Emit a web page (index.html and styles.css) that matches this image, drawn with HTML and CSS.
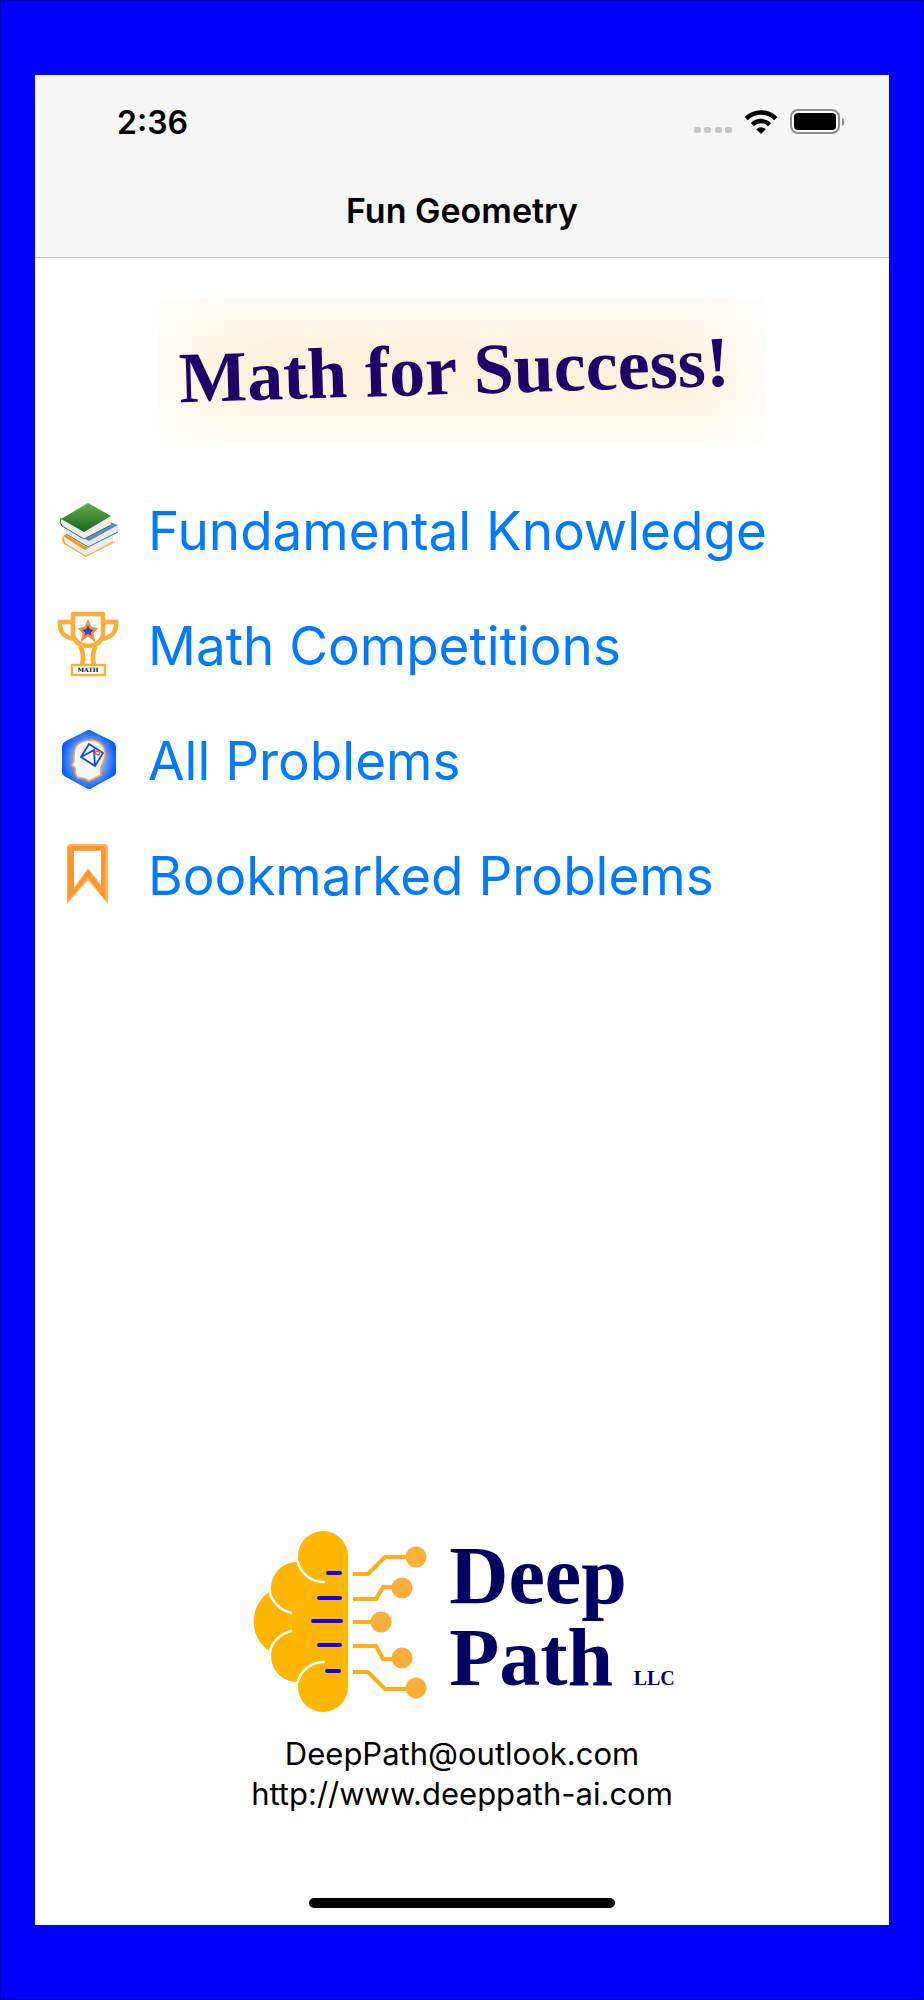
FILE: index.html
```html
<!DOCTYPE html>
<html lang="en">
<head>
    <meta charset="UTF-8">
    <meta name="viewport" content="width=device-width, initial-scale=1.0">
    <title>Fun Geometry</title>
    <link rel="stylesheet" href="styles.css">
</head>
<body>
    <div class="phone">
        <header class="top-bar">
            <div class="status-bar">
                <span class="time">2:36</span>
                <div class="status-icons">
                    <svg class="signal" width="38" height="24" viewBox="0 0 38 24" fill="#c7c7c7">
                        <rect x="0" y="17" width="7" height="6" rx="2"/>
                        <rect x="10" y="17" width="7" height="6" rx="2"/>
                        <rect x="21" y="17" width="7" height="6" rx="2"/>
                        <rect x="31" y="17" width="7" height="6" rx="2"/>
                    </svg>
                    <svg class="wifi" width="34" height="24" viewBox="0 0 34 24">
                        <path d="M2.2 8.6 A21 21 0 0 1 31.8 8.6" fill="none" stroke="#000" stroke-width="4.6"/>
                        <path d="M8.4 14.6 A12.2 12.2 0 0 1 25.6 14.6" fill="none" stroke="#000" stroke-width="4.4"/>
                        <path d="M12.2 19.2 Q17 15.4 21.8 19.2 L17 24 Z"/>
                    </svg>
                    <svg class="battery" width="55" height="26" viewBox="0 0 55 26">
                        <rect x="1" y="1" width="48" height="23" rx="7" fill="#fff" stroke="#8e8e8e" stroke-width="2"/>
                        <rect x="4" y="4" width="42" height="17" rx="4"/>
                        <path d="M52 9 Q54.4 10 54.4 13 T52 17 Z" fill="#8e8e8e"/>
                    </svg>
                </div>
            </div>
            <h1 class="title">Fun Geometry</h1>
        </header>

        <main>
            <div class="hero"><p class="slogan">Math for Success!</p></div>

            <nav class="menu">
                <a href="#fundamentals">
                    <svg class="icon" viewBox="0 0 64 64">
                        <defs>
                            <linearGradient id="green" x1="0" y1="0" x2="0" y2="1">
                                <stop offset="0" stop-color="#62ae4b"/>
                                <stop offset="1" stop-color="#1b641d"/>
                            </linearGradient>
                        </defs>
                        <!-- bottom, middle and top book -->
                        <path d="M5 37 L29 49 L29 56 L55 43 L55 40 L28 58 L6 45 Q3 41 5 37 Z" fill="#f4a12c"/>
                        <path d="M5 37 L28 50 L55 36 L55 42 L28 57 L7 44 Z" fill="#eee"/>
                        <path d="M5 37 L11 34 L32 48 L27 51 Z" fill="#ff9800"/>
                        <path d="M28 57 L57 43" stroke="#f4a12c" stroke-width="1"/>
                        <path d="M8 30 L30 41 L50 23 L60 26 L60 34 L30 49 L8 36 Z" fill="#e9e9ec"/>
                        <path d="M20 37 L52 23 L60 26 L31 42 Z" fill="#5f8bce"/>
                        <path d="M8 35 L30 48 L60 33" fill="none" stroke="#456b9e" stroke-width="1"/>
                        <path d="M3 20 L26 31 L53 18 L53 26 L26 40 L4 27 Z" fill="#ededed"/>
                        <path d="M30 4 L53 17 L26 33 L3 20 Z" fill="url(#green)"/>
                        <path d="M3 19 Q1 24 4 27 L26 40 L53 26" fill="none" stroke="#3b7b3a" stroke-width="1"/>
                    </svg>
                    <span>Fundamental Knowledge</span>
                </a>
                <a href="#competitions">
                    <svg class="icon" viewBox="0 1 64 64">
                        <g fill="none" stroke="#fdad38" stroke-width="4.6">
                            <path d="M15 1 H45 V19 Q45 32 30 33 Q15 32 15 19 Z" stroke-linejoin="round"/>
                            <path d="M15 9 H2 Q1 25 18 26 M45 9 H58 Q59 25 42 26"/>
                            <path d="M22 33 Q27 42 24 52 M38 33 Q33 42 36 52"/>
                        </g>
                        <path d="M30 9 L32.500 15 L38 16 L34 20 L35.500 26 L30 22 L24.500 26 L26 20 L22 16 L27.500 15 Z" fill="#2747bd" stroke="#f68b3b" stroke-width="2.400"/>
                        <rect x="14" y="52" width="33" height="10" fill="#fff" stroke="#fdad38" stroke-width="2.400"/>
                        <text class="plaque" x="30" y="59" text-anchor="middle">MATH</text>
                    </svg>
                    <span>Math Competitions</span>
                </a>
                <a href="#problems">
                    <svg class="icon" viewBox="0 0 64 64">
                        <defs>
                            <radialGradient id="halo">
                                <stop offset="0.4" stop-color="#a9c2ff"/>
                                <stop offset="1" stop-color="#0b5cff"/>
                            </radialGradient>
                        </defs>
                        <path d="M28 2 Q31 0 34 2 L54 12 Q58 14 58 18 V43 Q58 46 54 48 L34 59 Q31 61 28 59 L8 48 Q4 46 4 43 V18 Q4 14 8 12 Z" fill="url(#halo)"/>
                        <path d="M18 17 Q24 11 34 11 Q48 14 47 26 Q47 31 44 35 Q42 40 43 46 L31 52 Q25 48 20 49 Q17 46 17 39 L14 36 L16 32 Q15 24 18 17 Z" fill="#f7f8fb" stroke="#f8aa36" stroke-width="1.6"/>
                        <path d="M31 15 L45 24 L37 37 L23 28 Z M23 28 L36 21 L37 37" fill="none" stroke="#1249e8" stroke-width="1.8"/>
                        <path d="M38 22 L42 23 L41 26 L37 25 Z" fill="#fff" stroke="#f26b42" stroke-width="1.4"/>
                    </svg>
                    <span>All Problems</span>
                </a>
                <a href="#bookmarks">
                    <svg class="icon" viewBox="0 1 64 64">
                        <path d="M9 61 V5 Q9 1 13 1 H46 Q50 1 50 5 V61 L30 37 Z M15 46 L30 25 L44 43 V8 H15 Z" fill="#ffb35b" fill-rule="evenodd"/>
                        <path d="M10 58 V6 Q10 3 13 3 H44 Q47 3 47 6 V57 L30 34 Z M16 47 L30 27 L43 44 V7 H16 Z" fill="#ff962e" fill-rule="evenodd"/>
                    </svg>
                    <span>Bookmarked Problems</span>
                </a>
            </nav>
        </main>

        <footer>
            <div class="brand">
                <svg class="logo" width="174" height="184" viewBox="0 0 174 184">
                    <g fill="#ffb600">
                        <path d="M16 62 A36 36 0 0 0 16 121 L60 112 V66 Z"/>
                        <circle cx="44" cy="58" r="26"/>
                        <circle cx="44" cy="126" r="26"/>
                        <path d="M45 26 A25 25 0 0 1 95 26 V157 A25 25 0 0 1 45 157 Z"/>
                    </g>
                    <g fill="none" stroke="#fff" stroke-width="2.500">
                        <path d="M44.500 31 A27 27 0 0 0 72 52"/>
                        <path d="M16.500 61 A28 28 0 0 0 39 83"/>
                        <path d="M16.500 123 A28 28 0 0 1 39 101"/>
                        <path d="M44.500 153 A27 27 0 0 1 72 132"/>
                    </g>
                    <g stroke="#1200f5" stroke-width="4" stroke-linecap="round">
                        <path d="M75 43 H87 M66 68 H87 M60 91 H88 M66 115 H87 M74 141 H86"/>
                    </g>
                    <g fill="none" stroke="#ffad19" stroke-width="4" stroke-linejoin="round">
                        <path d="M100 44 H115 L132 27 H163"/>
                        <path d="M100 69 H123 L130 57 H150"/>
                        <path d="M100 92 H128"/>
                        <path d="M100 116 H123 L130 129 H150"/>
                        <path d="M100 142 H115 L132 159 H163"/>
                    </g>
                    <g fill="#fdae3b">
                        <circle cx="163" cy="27" r="10.500"/>
                        <circle cx="149" cy="58" r="10.500"/>
                        <circle cx="128" cy="92" r="10.500"/>
                        <circle cx="149" cy="128" r="10.500"/>
                        <circle cx="163" cy="158" r="10.500"/>
                    </g>
                </svg>
                <div class="brand-name">Deep<br>Path <small>LLC</small></div>
            </div>
            <address>
                <a href="mailto:DeepPath@outlook.com">DeepPath@outlook.com</a>
                <a href="http://www.deeppath-ai.com">http://www.deeppath-ai.com</a>
            </address>
            <div class="home-bar"></div>
        </footer>
    </div>
</body>
</html>
```
FILE: styles.css
```css
* {
    box-sizing: border-box;
}

body {
    display: flex;
    min-height: 100vh;
    margin: 0;
    padding: 74px 34px;
    border: 1px solid #000090;
    background: #0000ff;
    font-family: Inter, sans-serif;
}

.phone {
    flex: 1;
    display: flex;
    flex-direction: column;
    background: #fff;
}

a {
    text-decoration: none;
}

.top-bar {
    height: 183px;
    background: #f6f6f6;
    border-bottom: 1px solid #c8c8c8;
}

.status-bar {
    display: flex;
    justify-content: space-between;
    align-items: center;
    height: 94px;
    padding: 0 44px 0 82px;
}

.time {
    font-size: 32px;
    font-weight: 600;
}

.status-icons {
    display: flex;
    align-items: center;
    gap: 12px;
}

.title {
    margin: 18px 0 0;
    font-size: 34px;
    line-height: 48px;
    font-weight: 600;
    text-align: center;
}

.hero {
    display: flex;
    justify-content: center;
    align-items: center;
    width: 606px;
    max-width: 100%;
    height: 145px;
    margin: 40px auto 30px;
    padding-right: 16px;
    background: #fff1d9;
    box-shadow: inset 0 0 60px 26px #fffefc;
}

.slogan {
    margin: 0;
    color: #1e0069;
    font-family: "Liberation Serif", serif;
    font-size: 72px;
    font-weight: bold;
    white-space: nowrap;
    transform: rotate(-1.7deg);
}

.menu a {
    display: flex;
    align-items: center;
    gap: 26px;
    height: 115px;
    padding-left: 23px;
    color: #007aff;
    font-size: 53px;
}

.icon {
    width: 64px;
    height: 64px;
    overflow: visible;
}

.plaque {
    font-family: "DejaVu Serif", serif;
    font-size: 6px;
    font-weight: bold;
}

footer {
    margin-top: auto;
    padding-bottom: 17px;
}

.brand {
    display: flex;
    justify-content: center;
    align-items: center;
    gap: 22px;
    padding-left: 4px;
}

.brand-name {
    padding-top: 10px;
    color: #000064;
    font-family: "Liberation Serif", serif;
    font-size: 82px;
    line-height: 82px;
    font-weight: bold;
}

.brand-name small {
    font-size: 20px;
}

address {
    display: flex;
    flex-direction: column;
    align-items: center;
    margin: 15px 0 84px;
    font-size: 31px;
    line-height: 40px;
    font-style: normal;
}

address a {
    color: #000;
}

.home-bar {
    width: 306px;
    height: 10px;
    margin: 0 auto;
    border-radius: 5px;
    background: #000;
}
```
